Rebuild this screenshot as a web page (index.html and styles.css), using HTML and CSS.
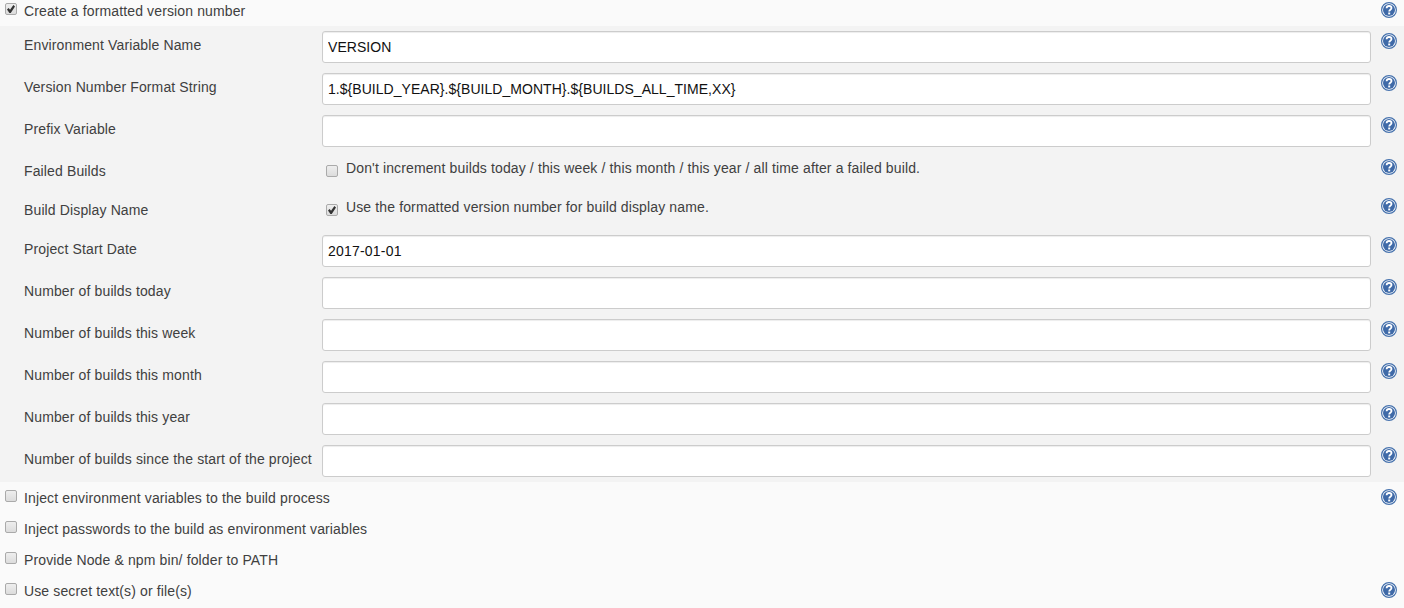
FILE: index.html
```html
<!DOCTYPE html>
<html lang="en">
<head>
	<meta charset="UTF-8">
	<title>Build Environment</title>
	<link rel="stylesheet" href="styles.css">
</head>
<body>
	<svg class="defs">
		<symbol id="help" viewBox="0 0 16 16">
			<circle cx="8" cy="8" r="7.4" fill="#fff" stroke="#4672ad" stroke-width="1.2"/>
			<circle cx="8" cy="8" r="6" fill="#3f6aa8"/>
			<path d="M5.6 6.2C5.7 4.7 6.7 4 8.1 4c1.5 0 2.4.8 2.4 2 0 1.8-2.3 1.8-2.3 3.5" fill="none" stroke="#fff" stroke-width="1.8"/>
			<rect x="7.2" y="10.5" width="2" height="1.9" fill="#fff"/>
		</symbol>
	</svg>
	<form class="config">
		<div class="option first">
			<input type="checkbox" class="check" id="o1" checked>
			<label for="o1">Create a formatted version number</label>
			<svg class="help"><use href="#help"/></svg>
		</div>
		<div class="group">
			<div class="row">
				<label class="name">Environment Variable Name</label>
				<input type="text" class="text" value="VERSION">
				<svg class="help"><use href="#help"/></svg>
			</div>
			<div class="row">
				<label class="name">Version Number Format String</label>
				<input type="text" class="text" value="1.${BUILD_YEAR}.${BUILD_MONTH}.${BUILDS_ALL_TIME,XX}">
				<svg class="help"><use href="#help"/></svg>
			</div>
			<div class="row">
				<label class="name">Prefix Variable</label>
				<input type="text" class="text">
				<svg class="help"><use href="#help"/></svg>
			</div>
			<div class="row short">
				<label class="name">Failed Builds</label>
				<div class="setting">
					<input type="checkbox" class="check" id="c1">
					<label for="c1">Don't increment builds today / this week / this month / this year / all time after a failed build.</label>
				</div>
				<svg class="help"><use href="#help"/></svg>
			</div>
			<div class="row short">
				<label class="name">Build Display Name</label>
				<div class="setting">
					<input type="checkbox" class="check" id="c2" checked>
					<label for="c2">Use the formatted version number for build display name.</label>
				</div>
				<svg class="help"><use href="#help"/></svg>
			</div>
			<div class="row">
				<label class="name">Project Start Date</label>
				<input type="text" class="text date" value="2017-01-01">
				<svg class="help"><use href="#help"/></svg>
			</div>
			<div class="row">
				<label class="name">Number of builds today</label>
				<input type="text" class="text">
				<svg class="help"><use href="#help"/></svg>
			</div>
			<div class="row">
				<label class="name">Number of builds this week</label>
				<input type="text" class="text">
				<svg class="help"><use href="#help"/></svg>
			</div>
			<div class="row">
				<label class="name">Number of builds this month</label>
				<input type="text" class="text">
				<svg class="help"><use href="#help"/></svg>
			</div>
			<div class="row">
				<label class="name">Number of builds this year</label>
				<input type="text" class="text">
				<svg class="help"><use href="#help"/></svg>
			</div>
			<div class="row">
				<label class="name">Number of builds since the start of the project</label>
				<input type="text" class="text">
				<svg class="help"><use href="#help"/></svg>
			</div>
		</div>
		<div class="option">
			<input type="checkbox" class="check" id="o2">
			<label for="o2">Inject environment variables to the build process</label>
			<svg class="help"><use href="#help"/></svg>
		</div>
		<div class="option">
			<input type="checkbox" class="check" id="o3">
			<label for="o3">Inject passwords to the build as environment variables</label>
		</div>
		<div class="option">
			<input type="checkbox" class="check" id="o4">
			<label for="o4">Provide Node &amp; npm bin/ folder to PATH</label>
		</div>
		<div class="option">
			<input type="checkbox" class="check" id="o5">
			<label for="o5">Use secret text(s) or file(s)</label>
			<svg class="help"><use href="#help"/></svg>
		</div>
	</form>
</body>
</html>
```
FILE: styles.css
```css
*{
	box-sizing: border-box;
	margin: 0;
	padding: 0;
}
body{
	background-color: #fafafa;
	color: #404040;
	font: 14px/20px "Liberation Sans", Arial, sans-serif;
	letter-spacing: 0.13px;
	overflow: hidden;
}
.defs{
	display: none;
}
.option,
.row{
	display: flex;
	align-items: flex-start;
	padding-right: 7px;
}
.option{
	height: 31px;
	padding-left: 5px;
}
.option.first{
	margin-top: -5px;
}
.option .check{
	margin-top: 8px;
}
.option label{
	margin: 6px 0 0 7px;
}
.group{
	background-color: #f3f3f3;
}
.row{
	height: 42px;
	padding-left: 24px;
}
.row.short{
	height: 39px;
}
.name{
	width: 298px;
	padding-top: 9px;
	white-space: nowrap;
}
.text{
	width: 1049px;
	height: 32px;
	margin-top: 5px;
	padding: 0 5px;
	border: 1px solid #ccc;
	border-radius: 3px;
	background-color: #fff;
	box-shadow: inset 0 1px 1px rgba(0,0,0,0.075);
	color: #111;
	font: inherit;
	letter-spacing: 0.04px;
}
.text.date{
	letter-spacing: 0.2px;
}
.setting{
	display: flex;
	padding-left: 4px;
}
.setting .check{
	margin-top: 13px;
}
.setting label{
	margin: 6px 0 0 8px;
}
.check{
	display: grid;
	place-items: center;
	flex: none;
	width: 12px;
	height: 12px;
	border: 1px solid #aaa;
	border-radius: 2px;
	background: linear-gradient(#eee, #dcdcdc);
	appearance: none;
}
.check:checked::after{
	content: "";
	width: 8px;
	height: 8px;
	background-color: #333;
	clip-path: polygon(0 55%, 20% 38%, 38% 58%, 80% 0, 100% 18%, 47% 100%, 30% 100%);
}
.help{
	width: 16px;
	height: 16px;
	flex: none;
	margin: 7px 0 0 auto;
}
```
